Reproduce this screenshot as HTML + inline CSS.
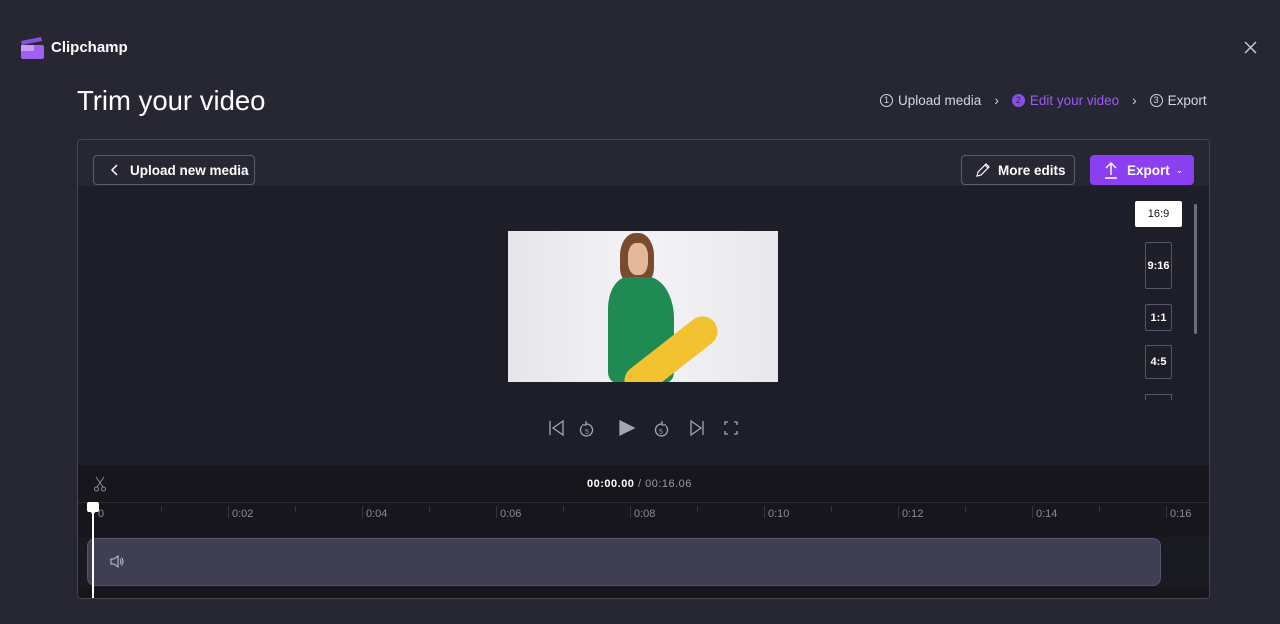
<!DOCTYPE html>
<html><head><meta charset="utf-8"><style>
*{margin:0;padding:0;box-sizing:border-box}
body{width:1280px;height:624px;background:#262733;font-family:"Liberation Sans",sans-serif;color:#fff;position:relative;overflow:hidden}
.abs{position:absolute}
.btn{position:absolute;border:1px solid #5c5d6a;border-radius:4px;font-size:13.5px;font-weight:bold;display:flex;align-items:center;color:#fff;white-space:nowrap}
.ar{position:absolute;border:1px solid #55566a;border-radius:2px;font-size:11px;font-weight:bold;display:flex;align-items:center;justify-content:center;color:#fff}
.lbl{position:absolute;top:508px;font-size:11px;color:#8a8b96}
.tk{position:absolute;top:506px;width:1px;height:12px;background:#33343d}
.tk2{position:absolute;top:506px;width:1px;height:6px;background:#33343d}
</style></head><body>
<div class="abs" style="left:20px;top:36px;width:24px;height:24px">
<svg width="24" height="24" viewBox="0 0 24 24"><path d="M1 5 L21 1 L22 5 L2 9Z" fill="#8b4de8"/><rect x="1" y="9" width="23" height="14" rx="2" fill="#a260f0"/><rect x="1" y="9" width="13" height="6" fill="#c79bf5"/></svg></div>
<div class="abs" style="left:51px;top:39px;font-size:15px;font-weight:bold">Clipchamp</div>
<svg class="abs" style="left:1244px;top:41px" width="13" height="13"><path d="M1 1L12 12M12 1L1 12" stroke="#cfd0d8" stroke-width="1.4"/></svg>
<div class="abs" style="left:77px;top:85px;font-size:27.5px">Trim your video</div>
<div class="abs" style="left:880px;top:93px;font-size:13.5px;color:#d5d6de;display:flex;align-items:center;white-space:nowrap">
<span style="display:inline-block;width:13px;height:13px;border:1px solid #d5d6de;border-radius:50%;font-size:9px;text-align:center;line-height:11px;margin-right:5px">1</span>Upload media<span style="margin:0 13px">›</span>
<span style="display:inline-block;width:13px;height:13px;background:#8b4de8;border-radius:50%;font-size:9px;text-align:center;line-height:13px;margin-right:5px;color:#262733">2</span><span style="color:#9a5cf0">Edit your video</span><span style="margin:0 13px">›</span>
<span style="display:inline-block;width:13px;height:13px;border:1px solid #d5d6de;border-radius:50%;font-size:9px;text-align:center;line-height:11px;margin-right:5px">3</span>Export</div>
<div class="abs" style="left:77px;top:139px;width:1133px;height:460px;border:1px solid #44454f;border-radius:4px;overflow:hidden">
 <div class="abs" style="left:0;top:46px;width:1131px;height:279px;background:#1e1e28"></div>
 <div class="abs" style="left:0;top:325px;width:1131px;height:134px;background:#16161c"></div>
 <div class="abs" style="left:0;top:362px;width:1131px;height:1px;background:#2a2b33"></div>
 <div class="abs" style="left:0;top:397px;width:1131px;height:50px;background:#1a1a21"></div>
</div>
<div class="btn" style="left:93px;top:155px;width:162px;height:30px;padding-left:36px">Upload new media</div>
<svg class="abs" style="left:110px;top:164px" width="10" height="12"><path d="M7 1L2 6L7 11" stroke="#fff" stroke-width="1.5" fill="none"/></svg>
<div class="btn" style="left:961px;top:155px;width:114px;height:30px;padding-left:36px">More edits</div>
<svg class="abs" style="left:975px;top:162px" width="16" height="16"><path d="M2 14L3 10L11 2L14 5L6 13Z M10 3L13 6" stroke="#fff" stroke-width="1.2" fill="none"/></svg>
<div class="btn" style="left:1090px;top:155px;width:104px;height:30px;background:#8b3ff0;border-color:#8b3ff0;padding-left:36px">Export <span style="font-size:9px;margin-left:6px;font-weight:normal">⌄</span></div>
<svg class="abs" style="left:1104px;top:161px" width="14" height="18"><path d="M7 14V2M2 7L7 2L12 7M1 17H13" stroke="#fff" stroke-width="1.4" fill="none"/></svg>
<div class="ar" style="left:1135px;top:201px;width:47px;height:26px;background:#fff;color:#111;border-color:#fff;font-weight:normal">16:9</div>
<div class="ar" style="left:1145px;top:242px;width:27px;height:47px">9:16</div>
<div class="ar" style="left:1145px;top:304px;width:27px;height:27px">1:1</div>
<div class="ar" style="left:1145px;top:345px;width:27px;height:34px">4:5</div>
<div class="abs" style="left:1145px;top:394px;width:27px;height:6px;border:1px solid #55566a;border-bottom:none"></div>
<div class="abs" style="left:1194px;top:204px;width:3px;height:130px;background:#6c6d78;border-radius:2px"></div>
<div class="abs" style="left:508px;top:231px;width:270px;height:151px;background:linear-gradient(90deg,#e6e6ea,#f3f3f5 50%,#e8e8ec);overflow:hidden">
 <div class="abs" style="left:112px;top:2px;width:34px;height:50px;background:#7a4a30;border-radius:45% 45% 30% 30%"></div>
 <div class="abs" style="left:120px;top:12px;width:20px;height:32px;background:#e4b99a;border-radius:40%"></div>
 <div class="abs" style="left:100px;top:46px;width:66px;height:105px;background:#1f8a52;border-radius:30% 40% 10% 10%"></div>
 <div class="abs" style="left:108px;top:110px;width:110px;height:30px;background:#f2c230;border-radius:15px;transform:rotate(-38deg)"></div>
</div>
<svg class="abs" style="left:548px;top:419px" width="200" height="18" viewBox="0 0 200 18" fill="none" stroke="#a3a4b4" stroke-width="1.3">
<path d="M2 2V16M15 2L5 9L15 16Z"/>
<path d="M38 5a6 6 0 1 1 -4 2M38 2V6H34"/><text x="39" y="15" font-size="7" fill="#a3a4b4" stroke="none" text-anchor="middle">5</text>
<path d="M72 2L86 9L72 16Z" fill="#a3a4b4"/>
<path d="M114 5a6 6 0 1 0 4 2M114 2V6H118"/><text x="113" y="15" font-size="7" fill="#a3a4b4" stroke="none" text-anchor="middle">5</text>
<path d="M143 2L153 9L143 16ZM155 2V16"/>
<path d="M177 6V3H180M186 3H189V6M189 12V15H186M180 15H177V12"/>
</svg>
<svg class="abs" style="left:93px;top:476px" width="14" height="16" fill="none" stroke="#8a8b96" stroke-width="1"><path d="M3 1L10 11M11 1L4 11"/><circle cx="3.5" cy="13" r="2"/><circle cx="10.5" cy="13" r="2"/></svg>
<div class="abs" style="left:587px;top:478px;font-size:11px;font-weight:bold;letter-spacing:.5px">00:00.00 <span style="color:#9a9ba6;font-weight:normal">/ 00:16.06</span></div>
<div class="tk2" style="left:161px"></div><div class="tk" style="left:228px"></div>
<div class="tk2" style="left:295px"></div><div class="tk" style="left:362px"></div>
<div class="tk2" style="left:429px"></div><div class="tk" style="left:496px"></div>
<div class="tk2" style="left:563px"></div><div class="tk" style="left:630px"></div>
<div class="tk2" style="left:697px"></div><div class="tk" style="left:764px"></div>
<div class="tk2" style="left:831px"></div><div class="tk" style="left:898px"></div>
<div class="tk2" style="left:965px"></div><div class="tk" style="left:1032px"></div>
<div class="tk2" style="left:1099px"></div><div class="tk" style="left:1166px"></div>
<div class="lbl" style="left:98px">0</div><div class="lbl" style="left:232px">0:02</div><div class="lbl" style="left:366px">0:04</div><div class="lbl" style="left:500px">0:06</div><div class="lbl" style="left:634px">0:08</div><div class="lbl" style="left:768px">0:10</div><div class="lbl" style="left:902px">0:12</div><div class="lbl" style="left:1036px">0:14</div><div class="lbl" style="left:1170px">0:16</div>
<div class="abs" style="left:87px;top:538px;width:1074px;height:48px;background:#3f3e52;border:1px solid #55546a;border-radius:8px"></div>
<svg class="abs" style="left:110px;top:555px" width="14" height="13" fill="none" stroke="#c8c8d2" stroke-width="1"><path d="M1 4H4L8 1V12L4 9H1Z M10 4Q12 6.5 10 9M11.5 2.5Q14.5 6.5 11.5 10.5"/></svg>
<div class="abs" style="left:92px;top:510px;width:2px;height:88px;background:#fff"></div>
<div class="abs" style="left:87px;top:502px;width:12px;height:10px;background:#fff;border-radius:2px"></div>
<div class="abs" style="left:89px;top:510px;width:0;height:0;border-left:4px solid transparent;border-right:4px solid transparent;border-top:5px solid #fff"></div>
</body></html>
